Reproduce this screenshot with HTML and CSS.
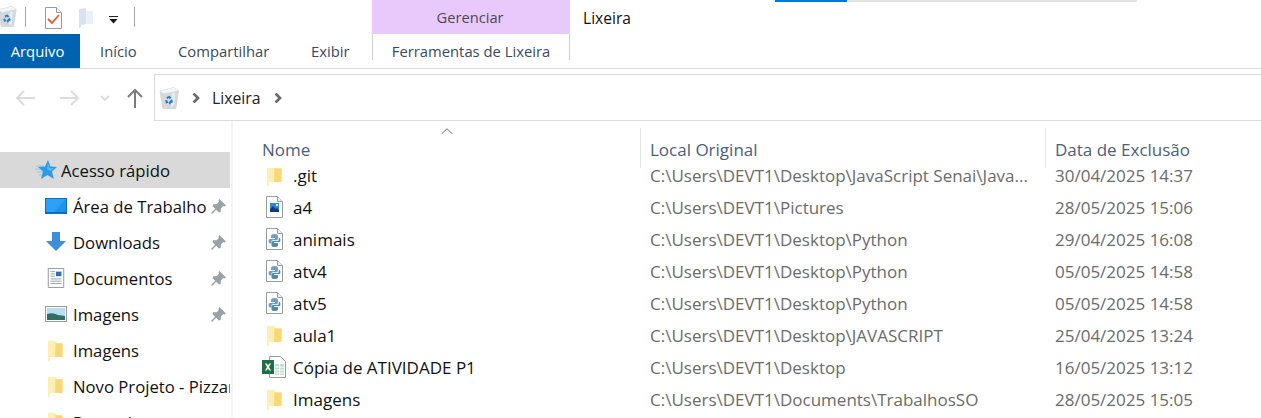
FILE: index.html
```html
<!DOCTYPE html>
<html lang="pt-BR">
<head>
<meta charset="utf-8">
<title>Lixeira</title>
<link rel="stylesheet" href="styles.css">
</head>
<body>
<svg class="defs" width="0" height="0" aria-hidden="true">
  <defs>
    <symbol id="bin" viewBox="0 0 20 22">
      <path d="M1 4 L15 .5 L19.500 3.500 L17 20.500 Q17 21.500 16 21.500 L5 21.500 Q4 21.500 3.800 20.500 Z" fill="#d5d9dd" stroke="#c4c9cd" stroke-width=".6"/>
      <path d="M1 4 L15 .5 L19.500 3.500 L5 6.500 Z" fill="#f3f5f6"/>
      <path d="M13 6 L16 5.500 L15 19 L12 20 Z" fill="#e9ecee"/>
      <path d="M7.500 10 L10.500 8.800 L12.500 11 L10.500 12 L9.500 10.800 L8.500 12.500 Z M13 12 L14 15 L11.500 16.500 L11 18 L9.500 15.500 L11 14 Z M6 13.500 L8 13 L9.300 16 L7 16.500 Z" fill="#1e7fd0"/>
    </symbol>
    <symbol id="folder" viewBox="0 0 15 21">
      <path d="M0 1 L7 1 L8 3 L14.500 3 L14.500 17 L2 17 L2 20 L0 21 Z" fill="#fbe08f"/>
      <path d="M0 1 L7 1 L7 17 L2 17 L2 20 L0 21 Z" fill="#fdeeb4"/>
      <path d="M8 4 L14.500 4 L14.500 17 L7 17 Z" fill="#f8d775"/>
    </symbol>
    <symbol id="page" viewBox="0 0 17 22">
      <path d="M.5 .5 L11.500 .5 L16.500 5.500 L16.500 21.500 L.5 21.500 Z" fill="#fff" stroke="#9a9a9a"/>
      <path d="M11.500 .5 L11.500 5.500 L16.500 5.500" fill="#f1f1f1" stroke="#9a9a9a"/>
    </symbol>
    <symbol id="python" viewBox="0 0 17 22">
      <use href="#page" width="17" height="22"/>
      <path d="M8.500 6 Q5 6 5 8 L5 10 L9 10 L9 11 L4 11 Q2.500 11 2.500 13 Q2.500 15.500 4.500 15.500 L5.500 15.500 L5.500 13.500 Q5.500 12.200 7 12.200 L10.500 12.200 Q12 12.200 12 10.500 L12 8 Q12 6 8.500 6 Z" fill="#6aa2c2"/>
      <path d="M8.500 19 Q12 19 12 17 L12 15 L8 15 L8 14 L13 14 Q14.500 14 14.500 12 Q14.500 9.500 12.800 9.500 L12.800 11.500 Q12.800 13 11 13 L7 13 Q5.500 13 5.500 14.500 L5.500 17 Q5.500 19 8.500 19 Z" fill="#4f8aa8"/>
    </symbol>
    <symbol id="picfile" viewBox="0 0 17 22">
      <use href="#page" width="17" height="22"/>
      <rect x="4" y="7" width="9" height="9" fill="#2f86d6"/>
      <path d="M4 16 L4 13 L7 10 L10 13 L11 12 L13 14 L13 16 Z" fill="#123c78"/>
      <rect x="10" y="8" width="2" height="2" fill="#dff0ff"/>
    </symbol>
    <symbol id="excel" viewBox="0 0 24 22">
      <path d="M7.500 .5 L18.500 .5 L23.500 5.500 L23.500 21.500 L7.500 21.500 Z" fill="#fff" stroke="#9a9a9a"/>
      <path d="M13 8h9v11h-9z" fill="#bfe0c9"/>
      <path d="M13 11h9M13 14h9M13 17h9M17.500 8v11" stroke="#fff"/>
      <rect x="0" y="4" width="12" height="14" fill="#1d7044"/>
      <path d="M3 7.500 L5 7.500 L6 9.800 L7.200 7.500 L9 7.500 L7 11 L9 14.500 L7.200 14.500 L6 12.200 L4.800 14.500 L3 14.500 L5 11 Z" fill="#fff"/>
    </symbol>
    <symbol id="pin" viewBox="0 0 16 16">
      <path d="M9 0 L16 7 L14.500 8 L13 7.500 L10.500 10 L10.500 13.500 L8.500 14.500 L5.500 11.500 L1 16 L0 15 L4.500 10.500 L1.500 7.500 L2.500 5.500 L6 5.500 L8.500 3 L8 1.500 Z" fill="#99a1a8"/>
    </symbol>
    <symbol id="chev" viewBox="0 0 8 10">
      <path d="M1.500 .5 L6 5 L1.500 9.500" fill="none" stroke="#6a6a6a" stroke-width="2.700"/>
    </symbol>
  </defs>
</svg>

<div class="titlebar">
  <svg class="qa-bin"><use href="#bin"/></svg>
  <span class="qa-sep"></span>
  <svg class="qa-check" viewBox="0 0 17 22">
    <use href="#page" width="17" height="22"/>
    <path d="M3 12 L7 16 L14 8" fill="none" stroke="#e8592b" stroke-width="1.800"/>
  </svg>
  <svg class="qa-folder" viewBox="0 0 15 20">
    <path d="M0 1 L7 0 L7 16 L2 17 L2 19 L0 20 Z" fill="#d6e2f2"/>
    <path d="M7 3 L14 3 L14 16 L7 16 Z" fill="#e9f0f9"/>
  </svg>
  <svg class="qa-drop" viewBox="0 0 9 8">
    <path d="M0 .5h9" stroke="#222"/>
    <path d="M.5 3 L8.500 3 L4.500 7.500 Z" fill="#111"/>
  </svg>
  <span class="qa-sep qa-sep-last"></span>
  <div class="context-title">Gerenciar</div>
  <div class="window-title">Lixeira</div>
  <div class="progress"><span class="progress-fill"></span></div>
</div>

<div class="tabs">
  <div class="tab tab-file">Arquivo</div>
  <div class="tab tab-inicio">Início</div>
  <div class="tab tab-share">Compartilhar</div>
  <div class="tab tab-view">Exibir</div>
  <div class="tab tab-context">Ferramentas de Lixeira</div>
</div>

<div class="navbar">
  <div class="nav-buttons">
    <svg class="nav-back" viewBox="0 0 20 16"><path d="M20 8H2M9 1 L2 8 L9 15" fill="none" stroke="#dcdcdc" stroke-width="2"/></svg>
    <svg class="nav-forward" viewBox="0 0 20 16"><path d="M0 8H18M11 1 L18 8 L11 15" fill="none" stroke="#dcdcdc" stroke-width="2"/></svg>
    <svg class="nav-down" viewBox="0 0 10 6"><path d="M1 1 L5 5 L9 1" fill="none" stroke="#dcdcdc" stroke-width="1.800"/></svg>
    <svg class="nav-up" viewBox="0 0 16 20"><path d="M8 20V2M1 9 L8 2 L15 9" fill="none" stroke="#7b7b7b" stroke-width="2"/></svg>
  </div>
  <div class="address">
    <svg class="addr-bin"><use href="#bin"/></svg>
    <svg class="addr-chev"><use href="#chev"/></svg>
    <span class="addr-text">Lixeira</span>
    <svg class="addr-chev addr-chev-end"><use href="#chev"/></svg>
  </div>
</div>

<div class="content">
  <nav class="sidebar">
    <div class="side-row side-top side-selected">
      <svg class="side-star" viewBox="0 0 22 20">
        <path d="M1 6h8M0 9h7M2 12h6M4 15h5" stroke="#8cc8f0" stroke-width="1"/>
        <path d="M13 0 L15.500 6.500 L22 7 L17 11.500 L18.800 19 L12.500 15 L6 19 L8 11.500 L3 7 L10 6.500 Z" fill="#2a9be8"/>
        <path d="M13 3 L14.500 8 L19 8.300 L15.500 11.300 L12 9 Z" fill="#5cb8f4"/>
      </svg>
      <span>Acesso rápido</span>
    </div>
    <div class="side-row">
      <svg class="side-icon" viewBox="0 0 22 16"><rect width="22" height="16" fill="#0f6cc0"/><path d="M1 1h20v13H1z" fill="#2ba2f8"/><path d="M21 1 L9 14 H21 Z" fill="#1e90ee"/></svg>
      <span class="side-label">Área de Trabalho</span>
      <svg class="side-pin"><use href="#pin"/></svg>
    </div>
    <div class="side-row">
      <svg class="side-icon" viewBox="0 0 22 20"><path d="M7 0h8v9h6 L11 19 L1 9h6z" fill="#3d8fdc"/></svg>
      <span class="side-label">Downloads</span>
      <svg class="side-pin"><use href="#pin"/></svg>
    </div>
    <div class="side-row">
      <svg class="side-icon" viewBox="0 0 22 22">
        <path d="M2.500 .5 H19.500 V21.500 H2.500 Z" fill="#fff" stroke="#8f8f8f"/>
        <rect x="11" y="4" width="6" height="5" fill="#2d6ea8"/>
        <path d="M5 4h5M5 6.500h5M5 9h5M5 12h12M5 14.500h12M5 17h12" stroke="#8f9aa5"/>
      </svg>
      <span class="side-label">Documentos</span>
      <svg class="side-pin"><use href="#pin"/></svg>
    </div>
    <div class="side-row">
      <svg class="side-icon" viewBox="0 0 22 16">
        <rect x=".5" y=".5" width="21" height="15" fill="#fff" stroke="#9a9a9a"/>
        <rect x="2" y="2" width="18" height="12" fill="#b9dcf3"/>
        <path d="M2 8 Q8 6 13 9 L20 10 L20 14 L2 14 Z" fill="#2f6f62"/>
      </svg>
      <span class="side-label">Imagens</span>
      <svg class="side-pin"><use href="#pin"/></svg>
    </div>
    <div class="side-row">
      <svg class="side-folder"><use href="#folder"/></svg>
      <span class="side-label">Imagens</span>
    </div>
    <div class="side-row">
      <svg class="side-folder"><use href="#folder"/></svg>
      <span class="side-label">Novo Projeto - Pizzaria</span>
    </div>
    <div class="side-row">
      <svg class="side-folder"><use href="#folder"/></svg>
      <span class="side-label">Pessoal</span>
    </div>
  </nav>

  <main class="files">
    <div class="head-row">
      <svg class="sort-caret" viewBox="0 0 12 6"><path d="M.5 6 L6 .7 L11.500 6" fill="none" stroke="#777"/></svg>
      <div class="col-name head-cell">Nome</div>
      <div class="col-path head-cell">Local Original</div>
      <div class="col-date head-cell">Data de Exclusão</div>
    </div>
    <div class="file-row">
      <div class="col-name"><span class="file-icon"><svg class="ic-folder"><use href="#folder"/></svg></span><span class="file-name">.git</span></div>
      <div class="col-path">C:\Users\DEVT1\Desktop\JavaScript Senai\Java...</div>
      <div class="col-date">30/04/2025 14:37</div>
    </div>
    <div class="file-row">
      <div class="col-name"><span class="file-icon"><svg class="ic-page"><use href="#picfile"/></svg></span><span class="file-name">a4</span></div>
      <div class="col-path">C:\Users\DEVT1\Pictures</div>
      <div class="col-date">28/05/2025 15:06</div>
    </div>
    <div class="file-row">
      <div class="col-name"><span class="file-icon"><svg class="ic-page"><use href="#python"/></svg></span><span class="file-name">animais</span></div>
      <div class="col-path">C:\Users\DEVT1\Desktop\Python</div>
      <div class="col-date">29/04/2025 16:08</div>
    </div>
    <div class="file-row">
      <div class="col-name"><span class="file-icon"><svg class="ic-page"><use href="#python"/></svg></span><span class="file-name">atv4</span></div>
      <div class="col-path">C:\Users\DEVT1\Desktop\Python</div>
      <div class="col-date">05/05/2025 14:58</div>
    </div>
    <div class="file-row">
      <div class="col-name"><span class="file-icon"><svg class="ic-page"><use href="#python"/></svg></span><span class="file-name">atv5</span></div>
      <div class="col-path">C:\Users\DEVT1\Desktop\Python</div>
      <div class="col-date">05/05/2025 14:58</div>
    </div>
    <div class="file-row">
      <div class="col-name"><span class="file-icon"><svg class="ic-folder"><use href="#folder"/></svg></span><span class="file-name">aula1</span></div>
      <div class="col-path">C:\Users\DEVT1\Desktop\JAVASCRIPT</div>
      <div class="col-date">25/04/2025 13:24</div>
    </div>
    <div class="file-row">
      <div class="col-name"><span class="file-icon"><svg class="ic-excel"><use href="#excel"/></svg></span><span class="file-name">Cópia de ATIVIDADE P1</span></div>
      <div class="col-path">C:\Users\DEVT1\Desktop</div>
      <div class="col-date">16/05/2025 13:12</div>
    </div>
    <div class="file-row">
      <div class="col-name"><span class="file-icon"><svg class="ic-folder"><use href="#folder"/></svg></span><span class="file-name">Imagens</span></div>
      <div class="col-path">C:\Users\DEVT1\Documents\TrabalhosSO</div>
      <div class="col-date">28/05/2025 15:05</div>
    </div>
  </main>
</div>
</body>
</html>
```

FILE: styles.css
```css
* { box-sizing: border-box; }

html, body {
  margin: 0;
  height: 418px;
  overflow: hidden;
  background: #fff;
}

body {
  font-family: "Open Sans", "Noto Sans", sans-serif;
  font-size: 15px;
  color: #111;
  display: flex;
  flex-direction: column;
}

.defs { display: block; height: 0; }

svg { display: block; flex: none; }

/* Title bar */
.titlebar {
  display: flex;
  align-items: flex-start;
  height: 34px;
  flex: none;
}
.qa-bin { width: 20px; height: 21px; margin: 6px 0 0 -3px; }
.qa-sep { width: 1px; height: 20px; margin: 7px 0 0 8px; background: #a8a8a8; }
.qa-check { width: 17px; height: 22px; margin: 7px 0 0 19px; }
.qa-folder { width: 15px; height: 20px; margin: 8px 0 0 17px; }
.qa-drop { width: 9px; height: 8px; margin: 16px 0 0 15px; }
.qa-sep-last { margin-left: 16px; }
.context-title {
  width: 198px;
  height: 34px;
  margin-left: 237px;
  padding-right: 2px;
  background: #e9c9fb;
  color: #4a4a52;
  font-size: 14.7px;
  line-height: 34px;
  text-align: center;
}
.window-title {
  width: 205px;
  padding-left: 13px;
  font-size: 15.6px;
  line-height: 36px;
  color: #111;
}
.progress {
  display: flex;
  width: 362px;
  height: 2px;
  background: #e3e3e3;
}
.progress-fill { width: 72px; background: #0078d7; }

/* Ribbon tabs */
.tabs {
  display: flex;
  height: 35px;
  flex: none;
  border-bottom: 1px solid #dadada;
  font-size: 14.8px;
  color: #3b4a5c;
}
.tab { line-height: 34px; }
.tab-file {
  width: 80px;
  padding-right: 5px;
  background: #0063b1;
  color: #fff;
  text-align: center;
}
.tab-inicio { margin-left: 20px; width: 78px; }
.tab-share { width: 133px; }
.tab-view { width: 61px; }
.tab-context {
  width: 198px;
  height: 26px;
  border-left: 1px solid #cfcfcf;
  border-right: 1px solid #cfcfcf;
  text-align: center;
}

/* Navigation bar */
.navbar {
  display: flex;
  height: 47px;
  margin-top: 5px;
  flex: none;
}
.nav-buttons {
  display: flex;
  align-items: center;
  width: 154px;
  flex: none;
}
.nav-back { width: 20px; height: 16px; margin-left: 15px; }
.nav-forward { width: 20px; height: 16px; margin-left: 25px; }
.nav-down { width: 10px; height: 6px; margin-left: 20px; }
.nav-up { width: 16px; height: 20px; margin-left: 17px; }
.address {
  flex: 1;
  display: flex;
  align-items: center;
  border: 1px solid #dadada;
  border-right: 0;
}
.addr-bin { width: 20px; height: 22px; margin-left: 4px; }
.addr-chev { width: 8px; height: 10px; margin-left: 13px; }
.addr-text { margin-left: 12px; font-size: 15.8px; color: #222; }
.addr-chev-end { margin-left: 13px; }

/* Body */
.content {
  display: flex;
  flex: 1;
  min-height: 0;
  overflow: hidden;
}
.sidebar {
  width: 233px;
  flex: none;
  padding-top: 31px;
  padding-right: 1px;
  border-right: 2px solid #f4f4f4;
  font-size: 16.7px;
  overflow: hidden;
}
.side-row {
  display: flex;
  align-items: center;
  height: 36px;
  flex: none;
  padding-left: 45px;
  color: #111;
  white-space: nowrap;
  overflow: hidden;
}
.side-top { padding-left: 35px; }
.side-selected { background: #d9d9d9; }
.side-star { width: 22px; height: 20px; margin-right: 4px; }
.side-icon { width: 22px; height: 20px; margin-right: 6px; }
.side-folder { width: 15px; height: 21px; margin: 0 10px 0 3px; }
.side-label { flex: 1; min-width: 0; }
.side-pin { width: 15px; height: 15px; margin-right: 4px; }

.files {
  flex: 1;
  min-width: 0;
  font-size: 17px;
}
.head-row {
  position: relative;
  z-index: 1;
  display: flex;
  height: 47px;
  margin-bottom: -8px;
  padding-top: 7px;
  background: #fff;
}
.sort-caret {
  position: absolute;
  left: 208px;
  top: 7px;
  width: 12px;
  height: 6px;
}
.head-cell {
  height: 40px;
  line-height: 44px;
  color: #4c607a;
}
.head-cell.col-path, .head-cell.col-date {
  border-left: 1px solid #e4e4e4;
  padding-left: 9px;
}
.col-name {
  display: flex;
  width: 407px;
  flex: none;
  padding-left: 29px;
  align-items: center;
}
.head-cell.col-name { display: block; }
.col-path {
  width: 405px;
  flex: none;
  padding-left: 10px;
  white-space: nowrap;
}
.col-date {
  flex: 1;
  padding-left: 10px;
  white-space: nowrap;
}
.file-row {
  display: flex;
  align-items: center;
  height: 32px;
  padding-bottom: 2px;
  color: #6b6b6b;
}
.file-icon {
  display: flex;
  justify-content: center;
  width: 26px;
  margin-left: -1px;
}
.ic-folder { width: 15px; height: 21px; }
.ic-page { width: 17px; height: 22px; }
.ic-excel { width: 24px; height: 22px; }
.file-name { color: #111; margin-left: 6px; }
```
